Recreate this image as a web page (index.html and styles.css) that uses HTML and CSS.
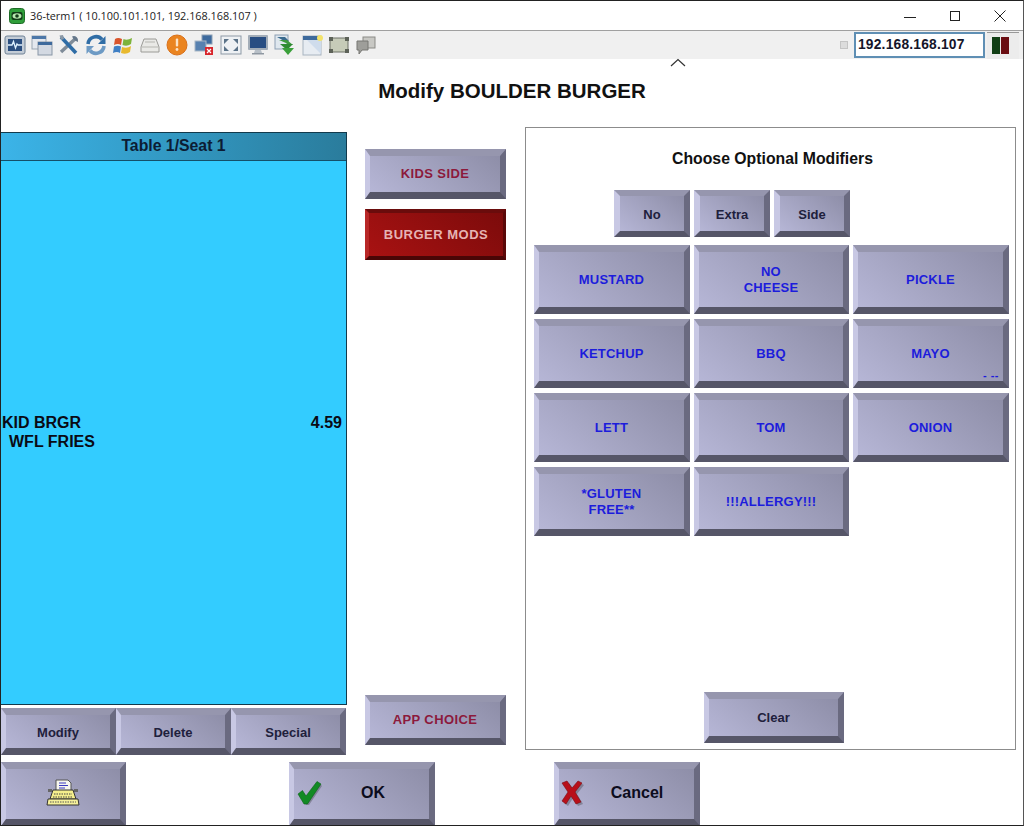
FILE: index.html
```html
<!DOCTYPE html>
<html lang="en">
<head>
<meta charset="utf-8">
<title>36-term1</title>
<link rel="stylesheet" href="styles.css">
</head>
<body>
<div class="window">
  <header class="titlebar">
    <svg class="app-icon" width="16" height="16" viewBox="0 0 16 16"><rect x="0.5" y="0.5" width="15" height="15" rx="3" fill="#2f9e3a" stroke="#1d6b26"/><rect x="2.5" y="4" width="11" height="8" rx="2" fill="#123b18"/><ellipse cx="8" cy="8" rx="4.5" ry="2.8" fill="#b8e8b0"/><circle cx="8" cy="8" r="1.8" fill="#123b18"/></svg>
    <span class="title-text">36-term1 ( 10.100.101.101, 192.168.168.107 )</span>
    <div class="win-controls">
      <svg width="12" height="12" viewBox="0 0 12 12"><path d="M0 7.5H12" stroke="#222" fill="none"/></svg>
      <svg width="12" height="12" viewBox="0 0 12 12"><rect x="1.5" y="1.5" width="9" height="9" stroke="#222" fill="none"/></svg>
      <svg width="12" height="12" viewBox="0 0 12 12"><path d="M0.5 0.5L11.5 11.5M11.5 0.5L0.5 11.5" stroke="#222" fill="none"/></svg>
    </div>
  </header>

  <div class="toolbar">
    <div class="tools">
      <svg class="tool" viewBox="0 0 22 22"><rect x="1" y="2" width="20" height="18" rx="2" fill="#c3ccd6" stroke="#6f8296"/><rect x="4" y="5" width="14" height="12" fill="#2b4f80"/><path d="M4 11H8L9.5 7.5L11.5 14L13 10L14 11H18" stroke="#dff2ff" stroke-width="1.3" fill="none"/></svg>
      <svg class="tool" viewBox="0 0 22 22"><rect x="1" y="2" width="14" height="13" fill="#e4e8ee" stroke="#9aa6b2"/><rect x="1" y="2" width="14" height="3" fill="#4d78a8"/><rect x="7" y="8" width="14" height="13" fill="#d3d9e2" stroke="#8896a6"/><rect x="7" y="8" width="14" height="3" fill="#3e6a9c"/></svg>
      <svg class="tool" viewBox="0 0 22 22"><path d="M3 18L17 5" stroke="#7f8c99" stroke-width="3.4" fill="none"/><path d="M14 2.5A4.5 4.5 0 0 1 20 8L17 6.5L15.5 5Z" fill="#65778a"/><path d="M3 3L18 19" stroke="#2f6da6" stroke-width="3.6" fill="none"/><path d="M1.5 1.5L5 1L6 5L3 6Z" fill="#8b98a5"/></svg>
      <svg class="tool" viewBox="0 0 22 22"><path d="M3 10A8 8 0 0 1 17 5.5" stroke="#2f6da6" stroke-width="3.6" fill="none"/><path d="M20.5 2V10H13Z" fill="#2f6da6"/><path d="M19 12A8 8 0 0 1 5 16.5" stroke="#6d9ac4" stroke-width="3.6" fill="none"/><path d="M1.5 20V12H9Z" fill="#6d9ac4"/></svg>
      <svg class="tool" viewBox="0 0 22 22"><path d="M3 5Q6 3 10 5L9 11Q6 9 2 11Z" fill="#d9542b"/><path d="M11.500 5Q15 7 20 4L19 10Q15 13 10.500 11Z" fill="#7cb33a"/><path d="M2 12.500Q6 11 9 12.500L8 19Q5 17 1 19Z" fill="#3f7fc4"/><path d="M10 13Q15 15 19 12L18 18Q14 21 9 19Z" fill="#e8b92e"/></svg>
      <svg class="tool" viewBox="0 0 22 22"><path d="M5 5H17L20 13V18H2V13Z" fill="#e9e9e6" stroke="#9a9a96"/><path d="M3 13H19M6 8H16" stroke="#b5b5b0" fill="none"/></svg>
      <svg class="tool" viewBox="0 0 22 22"><circle cx="11" cy="11" r="10" fill="#ea8420" stroke="#d9701a"/><rect x="9.800" y="4.500" width="2.400" height="8" rx="1" fill="#fbe3c6"/><circle cx="11" cy="15.500" r="1.400" fill="#fbe3c6"/></svg>
      <svg class="tool" viewBox="0 0 22 22"><rect x="9" y="1" width="10" height="9" fill="#3d6a9e" stroke="#8da0b4"/><rect x="2" y="7" width="11" height="10" fill="#5781b0" stroke="#a8b6c4"/><rect x="12" y="13" width="8" height="8" fill="#d8262c"/><path d="M14 15L18 19M18 15L14 19" stroke="#fff" stroke-width="1.200"/></svg>
      <svg class="tool" viewBox="0 0 22 22"><rect x="1" y="2" width="20" height="18" fill="#eef1f4" stroke="#8d99a6"/><path d="M4 5H9L4 10ZM18 5H13L18 10ZM4 17H9L4 12ZM18 17H13L18 12Z" fill="#5a7288"/></svg>
      <svg class="tool" viewBox="0 0 22 22"><rect x="1" y="1" width="20" height="15" rx="1" fill="#a3adb8"/><rect x="3" y="3" width="16" height="11" fill="#284d82"/><path d="M8 16H14L15 19H7Z" fill="#b8c0c8"/><rect x="5" y="19" width="12" height="1.500" fill="#8f98a2"/></svg>
      <svg class="tool" viewBox="0 0 22 22"><rect x="1" y="1" width="13" height="14" fill="#dfe7ee" stroke="#8da0b4"/><path d="M3 3H11L15 7L12 8Z" fill="#3a6a8e"/><path d="M5 6L13 6L19 11H14L12 9Z" fill="#3e9a3e"/><path d="M6 10H19L13 16Z" fill="#2f8a33"/><path d="M8 14H20L14 21Z" fill="#3aa03a"/></svg>
      <svg class="tool" viewBox="0 0 22 22"><rect x="2" y="2" width="18" height="19" fill="#e7ecf2" stroke="#a8b4c0"/><rect x="2" y="2" width="18" height="4" fill="#3e6a9c"/><path d="M6 6H20V20Z" fill="#cfdcec"/><circle cx="19" cy="4" r="3" fill="#f3e36a"/></svg>
      <svg class="tool" viewBox="0 0 22 22"><rect x="2" y="4" width="18" height="14" rx="1" fill="#c6cbb8" stroke="#6c7066"/><rect x="1" y="3" width="4" height="4" fill="#5d6258"/><rect x="17" y="3" width="4" height="4" fill="#5d6258"/><rect x="1" y="15" width="4" height="4" fill="#5d6258"/><rect x="17" y="15" width="4" height="4" fill="#5d6258"/></svg>
      <svg class="tool" viewBox="0 0 22 22"><rect x="8" y="3" width="12" height="11" fill="#c8c8c4" stroke="#8a8a86"/><path d="M2 7H13V16H7L4 20V16H2Z" fill="#9e9e9a" stroke="#777773"/></svg>
    </div>
    <span class="check-box"></span>
    <div class="address">192.168.168.107</div>
    <div class="signal"><span class="signal-green"></span><span class="signal-red"></span></div>
  </div>

  <div class="heading">
    <h1>Modify BOULDER BURGER</h1>
    <svg class="chevron" width="16" height="9" viewBox="0 0 16 9"><path d="M1 8L8 1.500L15 8" stroke="#333" stroke-width="1.200" fill="none"/></svg>
  </div>

  <main class="content">
    <section class="check">
      <div class="check-panel">
        <div class="check-head">Table 1/Seat 1</div>
        <div class="check-body">
          <div class="line"><span>KID BRGR</span><span>4.59</span></div>
          <div class="line line-sub"><span>WFL FRIES</span></div>
        </div>
      </div>
      <div class="check-actions">
        <button class="btn">Modify</button>
        <button class="btn">Delete</button>
        <button class="btn">Special</button>
      </div>
    </section>

    <section class="groups">
      <button class="btn btn-maroon group">KIDS SIDE</button>
      <button class="btn btn-red group">BURGER MODS</button>
      <button class="btn btn-maroon group group-end">APP CHOICE</button>
    </section>

    <section class="modifiers">
      <h2>Choose Optional Modifiers</h2>
      <div class="qualifiers">
        <button class="btn">No</button>
        <button class="btn">Extra</button>
        <button class="btn">Side</button>
      </div>
      <div class="mod-grid">
        <button class="btn btn-blue">MUSTARD</button>
        <button class="btn btn-blue">NO<br>CHEESE</button>
        <button class="btn btn-blue">PICKLE</button>
        <button class="btn btn-blue">KETCHUP</button>
        <button class="btn btn-blue">BBQ</button>
        <button class="btn btn-blue btn-note">MAYO<span class="note">- --</span></button>
        <button class="btn btn-blue">LETT</button>
        <button class="btn btn-blue">TOM</button>
        <button class="btn btn-blue">ONION</button>
        <button class="btn btn-blue">*GLUTEN<br>FREE**</button>
        <button class="btn btn-blue">!!!ALLERGY!!!</button>
      </div>
      <button class="btn clear">Clear</button>
    </section>
  </main>

  <footer class="footer">
    <button class="btn btn-big btn-print">
      <svg width="34" height="28" viewBox="0 0 34 28"><path d="M10 1H22L25 4V12H10Z" fill="#f6f6ee" stroke="#555"/><path d="M13 4H20M13 6.500H22M13 9H19" stroke="#3a3ac0" fill="none"/><path d="M7 11H27L30 20H4Z" fill="#f4ee8c" stroke="#333"/><rect x="2" y="10" width="4" height="3" fill="#666"/><rect x="28" y="10" width="4" height="3" fill="#666"/><path d="M8 15H26M7 18H27" stroke="#444" stroke-dasharray="1.500 1" fill="none"/><path d="M2 20H32L33 26H1Z" fill="#f6f09a" stroke="#333"/><path d="M4 23H30" stroke="#555" stroke-dasharray="1.500 1" fill="none"/></svg>
    </button>
    <button class="btn btn-big btn-ok">
      <svg class="action-icon" width="26" height="26" viewBox="0 0 26 26"><path d="M3 15L7 12L11 18L23 3L25 5L12 24H9Z" fill="#5a5a68" opacity="0.5" transform="translate(1 1)"/><path d="M2 14L6.500 10.500L10 16L21 1.500L25 4L11.500 24H8Z" fill="#128a24" stroke="#0c5f18" stroke-width="0.600"/></svg>
      <span class="action-label">OK</span>
    </button>
    <button class="btn btn-big btn-cancel">
      <svg class="action-icon" width="24" height="26" viewBox="0 0 24 26"><path d="M2 4L7 2L12 9L18 2L22 4L15 13L21 23L16 25L11 17L6 25L2 22L8 13Z" fill="#5a5a68" opacity="0.5" transform="translate(1 1)"/><path d="M1 3L6 1L11 8L17 1L21 3L14 12L20 22L15 24L10 16L5 24L1 21L7 12Z" fill="#b8101a" stroke="#7a0c10" stroke-width="0.600"/></svg>
      <span class="action-label">Cancel</span>
    </button>
  </footer>
</div>
</body>
</html>
```

FILE: styles.css
```css
* { box-sizing: border-box; }

html, body { margin: 0; padding: 0; }

body {
  width: 1024px;
  height: 826px;
  overflow: hidden;
  background: #fff;
  font-family: "Liberation Sans", Arial, sans-serif;
}

.window {
  width: 1024px;
  height: 826px;
  display: flex;
  flex-direction: column;
  border-top: 1px solid #222;
  border-left: 1px solid #222;
  border-bottom: 1px solid #222;
  border-right: 1px solid #555;
  overflow: hidden;
  background: #fff;
}

/* Title bar */
.titlebar {
  height: 30px;
  flex: none;
  display: flex;
  align-items: center;
  padding-left: 8px;
  background: #fff;
  border-bottom: 1px solid #a0a0a0;
}

.app-icon { flex: none; }

.title-text {
  margin-left: 5px;
  font-family: "Open Sans", "Noto Sans", sans-serif;
  font-size: 10.85px;
  color: #222;
  white-space: nowrap;
}

.win-controls {
  margin-left: auto;
  margin-right: 17px;
  display: flex;
  gap: 33px;
}

/* Toolbar */
.toolbar {
  height: 28px;
  flex: none;
  display: flex;
  align-items: center;
  padding-left: 3px;
  background: #f0f0f0;
}

.tools { display: flex; gap: 5px; }

.tool { width: 22px; height: 22px; display: block; }

.check-box {
  width: 8px;
  height: 8px;
  margin-left: 463px;
  background: #dcdcdc;
  border: 1px solid #c4c4c4;
}

.address {
  width: 131px;
  height: 26px;
  margin-left: 6px;
  padding-left: 2px;
  padding-bottom: 1px;
  display: flex;
  align-items: center;
  background: #fff;
  border: 2px solid #5f8fb4;
  font-size: 13.8px;
  font-weight: 700;
  letter-spacing: 0.2px;
  color: #15152a;
}

.signal {
  width: 32px;
  height: 27px;
  margin-left: 2px;
  padding-right: 6px;
  display: flex;
  justify-content: center;
  align-items: center;
  gap: 1px;
  border-top: 1px solid #999;
  background: #ececec;
}

.signal-green, .signal-red { display: block; width: 8px; height: 17px; }
.signal-green { background: #123f16; }
.signal-red { background: #6a0d12; }

/* Heading */
.heading {
  position: relative;
  height: 68px;
  flex: none;
  display: flex;
  align-items: center;
  justify-content: center;
  padding-bottom: 4px;
}

.heading h1 {
  margin: 0;
  font-size: 20.5px;
  font-weight: 700;
  color: #111;
}

.chevron { position: absolute; left: 669px; top: -1px; }

/* Main area */
.content {
  height: 628px;
  flex: none;
  display: flex;
}

.check {
  width: 346px;
  flex: none;
  padding-top: 5px;
  display: flex;
  flex-direction: column;
  gap: 3px;
}

.check-panel {
  flex: 1;
  display: flex;
  flex-direction: column;
  border: 1px solid #123a4c;
  border-left: 0;
}

.check-head {
  height: 28px;
  flex: none;
  display: flex;
  align-items: center;
  justify-content: center;
  padding-bottom: 1px;
  background: linear-gradient(90deg, #3bb4e8, #2a7c9c);
  border-bottom: 1px solid #14506a;
  font-size: 15.8px;
  font-weight: 700;
  color: #0c1c34;
}

.check-body {
  flex: 1;
  display: flex;
  flex-direction: column;
  justify-content: center;
  padding: 0 4px 2px 1px;
  background: #33ccff;
  font-size: 16px;
  font-weight: 700;
  color: #0a0a14;
  line-height: 19px;
}

.line { display: flex; justify-content: space-between; }
.line-sub { padding-left: 7px; }

.check-actions {
  height: 47px;
  flex: none;
  display: grid;
  grid-template-columns: repeat(3, 115px);
}

.check-actions .btn, .qualifiers .btn, .group { padding-top: 2px; }

.groups {
  width: 141px;
  margin-left: 18px;
  flex: none;
  padding: 22px 0 10px;
  display: flex;
  flex-direction: column;
  gap: 10px;
}

.group { height: 50px; flex: none; }
.group-end { margin-top: auto; }

.modifiers {
  width: 491px;
  margin-left: 19px;
  height: 623px;
  flex: none;
  display: flex;
  flex-direction: column;
  padding: 21px 6px 6px 8px;
  border: 1px solid #8c8c8c;
}

.modifiers h2 {
  margin: 0;
  height: 19px;
  padding-left: 2px;
  font-size: 15.8px;
  line-height: 19px;
  font-weight: 700;
  text-align: center;
  color: #111;
}

.qualifiers {
  margin-top: 22px;
  margin-left: 80px;
  height: 47px;
  flex: none;
  display: flex;
  gap: 4px;
}

.qualifiers .btn { width: 76px; border-width: 6px; }

.mod-grid {
  margin-top: 8px;
  flex: none;
  display: grid;
  grid-template-columns: 156px 155px 156px;
  grid-auto-rows: 69px;
  gap: 5px 4px;
}

.clear {
  width: 140px;
  height: 51px;
  margin-top: auto;
  margin-left: 170px;
  flex: none;
}

/* Footer */
.footer {
  flex: 1;
  margin-top: 7px;
  display: flex;
  align-items: flex-start;
}

.btn-print { width: 125px; }
.btn-ok { width: 146px; margin-left: 163px; }
.btn-cancel { width: 146px; margin-left: 119px; }

/* Bevelled buttons */
.btn {
  position: relative;
  display: flex;
  align-items: center;
  justify-content: center;
  padding: 0;
  border-style: solid;
  border-width: 7px 6px 7px 5px;
  border-color: #9696ae #6a6a80 #565668 #c8c8e4;
  background: linear-gradient(40deg, #b6b6d6, #8e8ea8) padding-box;
  font-family: "Liberation Sans", Arial, sans-serif;
  font-size: 13px;
  line-height: 16px;
  font-weight: 700;
  color: #20203c;
  text-align: center;
}

.btn-blue { color: #1c1cdc; letter-spacing: 0.2px; }
.btn-maroon { color: #8c1a3c; letter-spacing: 0.4px; }

.btn-red {
  height: 51px;
  border-width: 4px 3px 4px 4px;
  border-color: #6a0c0c #5a0808 #4a0606 #b82828;
  background: linear-gradient(40deg, #a81212, #7c0b0b) padding-box;
  color: #e6b4b4;
  letter-spacing: 0.5px;
}

.btn-big {
  height: 64px;
  flex: none;
  padding-bottom: 2px;
  font-size: 16px;
  color: #0c0c1c;
}

.btn-ok, .btn-cancel { justify-content: flex-start; }

.action-icon { flex: none; margin-left: 2px; }

.action-label { flex: 1; padding-right: 5px; }

.note {
  position: absolute;
  right: 4px;
  bottom: 0;
  font-size: 11px;
  line-height: 11px;
  letter-spacing: 0.5px;
}
```
